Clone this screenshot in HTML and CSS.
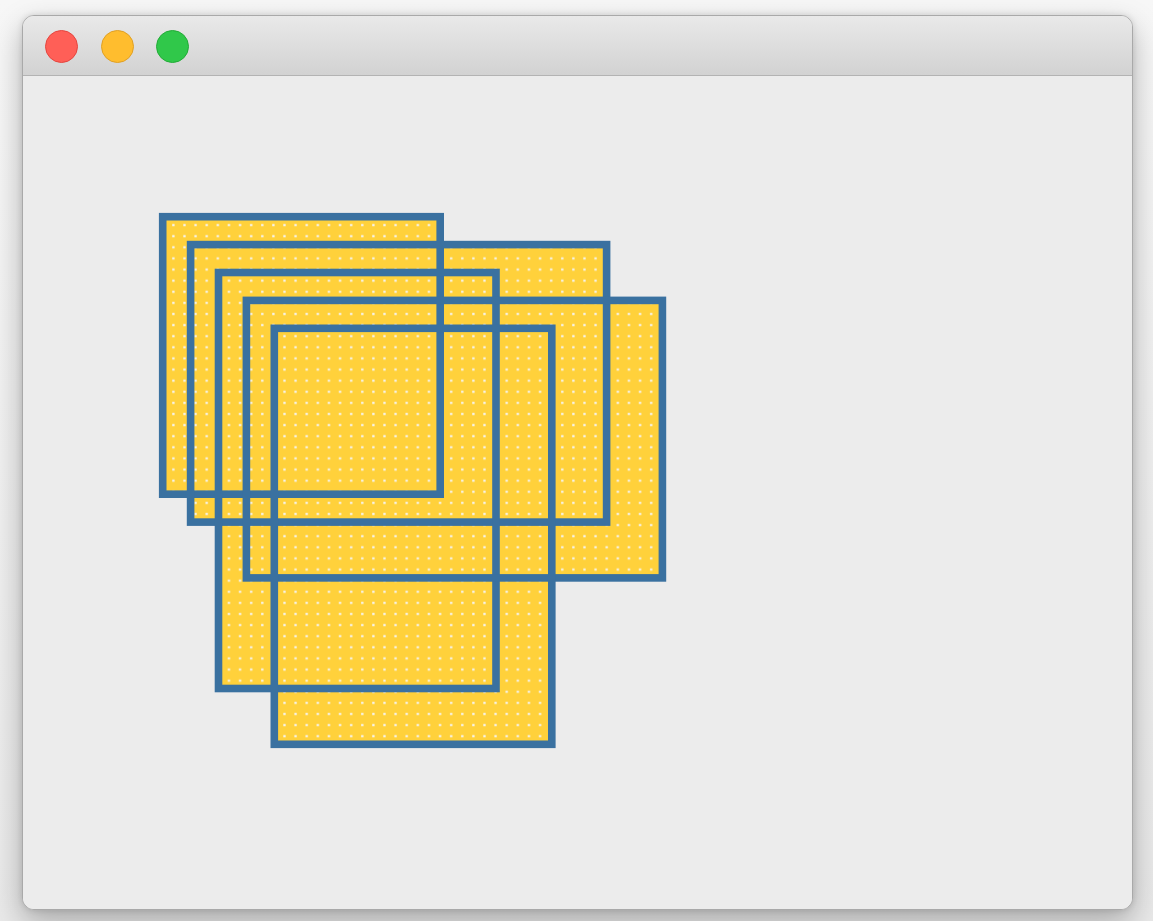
FILE: index.html
```html
<!DOCTYPE html>
<html>
<head>
<meta charset="utf-8">
<title>Squares</title>
<link rel="stylesheet" href="styles.css">
</head>
<body>
<div class="window">
  <div class="titlebar">
    <span class="light red"></span>
    <span class="light yellow"></span>
    <span class="light green"></span>
  </div>
  <div class="content">
    <svg class="canvas" width="1109" height="833" viewBox="0 0 1109 833">
      <defs>
        <pattern id="dots" patternUnits="userSpaceOnUse" x="0" y="0" width="11.111" height="11.111">
          <rect width="11.111" height="11.111" fill="#ffd13b"/>
          <rect x="4.8" y="3.5" width="2.3" height="2.3" fill="#f6f2e8"/>
        </pattern>
      </defs>
      <g fill="url(#dots)" stroke="none">
        <rect x="139.7" y="140.7" width="277.5" height="277.5"/>
        <rect x="167.6" y="168.6" width="416" height="277.5"/>
        <rect x="195.5" y="196.5" width="277.5" height="416"/>
        <rect x="223.4" y="224.4" width="416" height="277.5"/>
        <rect x="251.3" y="252.3" width="277.5" height="416"/>
      </g>
      <g fill="none" stroke="#3a71a0" stroke-width="7.6">
        <rect x="139.7" y="140.7" width="277.5" height="277.5"/>
        <rect x="167.6" y="168.6" width="416" height="277.5"/>
        <rect x="195.5" y="196.5" width="277.5" height="416"/>
        <rect x="223.4" y="224.4" width="416" height="277.5"/>
        <rect x="251.3" y="252.3" width="277.5" height="416"/>
      </g>
    </svg>
  </div>
</div>
</body>
</html>
```

FILE: styles.css
```css
html, body {
  margin: 0;
  padding: 0;
}
body {
  width: 1153px;
  height: 921px;
  overflow: hidden;
  background: linear-gradient(#f7f7f7, #e9e9e9);
  font-family: "Liberation Sans", Arial, sans-serif;
  padding-top: 15px;
  padding-left: 22px;
  box-sizing: border-box;
}
.window {
  width: 1111px;
  height: 895px;
  box-sizing: border-box;
  border: 1px solid #a9a9a9;
  border-radius: 12px;
  overflow: hidden;
  background: #ececec;
  box-shadow: 0 12px 30px rgba(0, 0, 0, 0.28), 0 0 6px rgba(0, 0, 0, 0.12);
  display: flex;
  flex-direction: column;
}
.titlebar {
  height: 58px;
  flex: none;
  background: linear-gradient(#e9e9e9, #d2d2d2);
  border-bottom: 1px solid #b3b3b3;
  display: flex;
  align-items: center;
  gap: 22.5px;
  padding-left: 22px;
  padding-top: 1px;
  box-sizing: content-box;
}
.light {
  width: 33px;
  height: 33px;
  border-radius: 50%;
  box-sizing: border-box;
  display: block;
}
.red {
  background: #ff5f57;
  border: 1px solid #e5453e;
}
.yellow {
  background: #ffbd2e;
  border: 1px solid #e0a024;
}
.green {
  background: #30c84a;
  border: 1px solid #22ac36;
}
.content {
  flex: 1;
  background: #ececec;
}
.canvas {
  display: block;
}
```
